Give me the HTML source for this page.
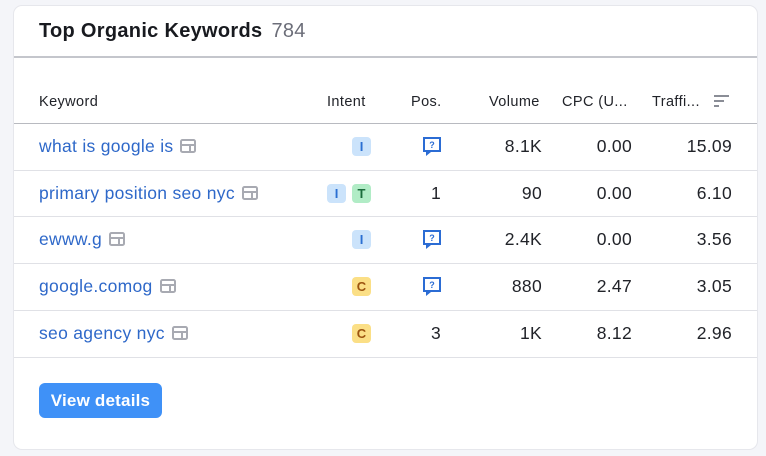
<!DOCTYPE html>
<html><head><style>
body{margin:0;width:766px;height:456px;background:#f4f5f9;font-family:"Liberation Sans",sans-serif;position:relative;overflow:hidden}
.card{position:absolute;left:14px;top:6px;width:743px;height:443px;background:#fff;border-radius:8px;box-shadow:0 0 0 1px #e6e7ec}
.t{position:absolute;white-space:nowrap}
h1{position:absolute;left:25px;top:14px;margin:0;font-size:20px;letter-spacing:0.3px;font-weight:bold;color:#181a1f}
h1 span{font-weight:normal;color:#6c6e79;margin-left:9px}
.hl{position:absolute;left:0;right:0;height:2px;background:#c4c6cc;top:50px}
.line{position:absolute;left:0;right:0;height:1px;background:#e0e1e6}
.th{font-size:14.5px;letter-spacing:0.4px;color:#212329;top:88px}
.r{text-align:right}
.kw{color:#2e68c9;font-size:17.5px;letter-spacing:0.3px;left:25px}
.num{font-size:17.5px;letter-spacing:0.3px;color:#212329}
.b{position:absolute;width:19px;height:19px;border-radius:4px;font-size:13px;font-weight:bold;text-align:center;line-height:19px}
.I{background:#cbe3fb;color:#2b6fd2}.T{background:#b1ecc6;color:#1b6b3c}.C{background:#fbdf86;color:#9c5410}
.ic{display:inline-block;vertical-align:-1px;margin-left:7px}
.btn{position:absolute;left:25px;top:377px;width:123px;height:35px;background:#3f91f7;border-radius:6px;color:#fff;font-size:17px;letter-spacing:0.2px;font-weight:bold;line-height:35px;text-align:center}
</style></head><body>
<div class="card">
<h1>Top Organic Keywords<span>784</span></h1>
<div class="hl"></div>
<div class="t th" style="left:25px">Keyword</div>
<div class="t th" style="left:313px">Intent</div>
<div class="t th" style="left:397px">Pos.</div>
<div class="t th" style="left:475px">Volume</div>
<div class="t th" style="left:548px">CPC (U...</div>
<div class="t th" style="left:638px">Traffi...</div>
<svg class="t" style="left:700px;top:88px" width="16" height="14"><rect x="0" y="1" width="15" height="2" fill="#8a8d96"/><rect x="0" y="6" width="10" height="2" fill="#8a8d96"/><rect x="0" y="11" width="5" height="2" fill="#8a8d96"/></svg>
<div class="line" style="top:117px;height:1px;background:#b8bac0"></div>
<div class="line" style="top:164px"></div>
<div class="line" style="top:210px"></div>
<div class="line" style="top:257px"></div>
<div class="line" style="top:304px"></div>
<div class="line" style="top:351px"></div>

<div class="t kw" style="top:130px">what is google is<svg class="ic" width="16" height="14"><rect x="1" y="1" width="14" height="12" rx="1.5" fill="none" stroke="#a8aab2" stroke-width="2"/><rect x="1" y="5" width="14" height="2" fill="#a8aab2"/><rect x="9" y="5" width="2" height="8" fill="#a8aab2"/></svg></div>
<div class="t kw" style="top:177px">primary position seo nyc<svg class="ic" width="16" height="14"><rect x="1" y="1" width="14" height="12" rx="1.5" fill="none" stroke="#a8aab2" stroke-width="2"/><rect x="1" y="5" width="14" height="2" fill="#a8aab2"/><rect x="9" y="5" width="2" height="8" fill="#a8aab2"/></svg></div>
<div class="t kw" style="top:223px">ewww.g<svg class="ic" width="16" height="14"><rect x="1" y="1" width="14" height="12" rx="1.5" fill="none" stroke="#a8aab2" stroke-width="2"/><rect x="1" y="5" width="14" height="2" fill="#a8aab2"/><rect x="9" y="5" width="2" height="8" fill="#a8aab2"/></svg></div>
<div class="t kw" style="top:270px">google.comog<svg class="ic" width="16" height="14"><rect x="1" y="1" width="14" height="12" rx="1.5" fill="none" stroke="#a8aab2" stroke-width="2"/><rect x="1" y="5" width="14" height="2" fill="#a8aab2"/><rect x="9" y="5" width="2" height="8" fill="#a8aab2"/></svg></div>
<div class="t kw" style="top:317px">seo agency nyc<svg class="ic" width="16" height="14"><rect x="1" y="1" width="14" height="12" rx="1.5" fill="none" stroke="#a8aab2" stroke-width="2"/><rect x="1" y="5" width="14" height="2" fill="#a8aab2"/><rect x="9" y="5" width="2" height="8" fill="#a8aab2"/></svg></div>

<div class="b I" style="left:338px;top:131px">I</div>
<div class="b I" style="left:313px;top:178px">I</div><div class="b T" style="left:338px;top:178px">T</div>
<div class="b I" style="left:338px;top:224px">I</div>
<div class="b C" style="left:338px;top:271px">C</div>
<div class="b C" style="left:338px;top:318px">C</div>

<svg class="t" style="left:408px;top:130px" width="20" height="21"><path d="M1 1h18v15H9l-5 4v-4H1z" fill="#2b6cd4"/><rect x="3" y="3" width="14" height="11" fill="#fff"/><text x="10" y="12" font-size="9" font-weight="bold" text-anchor="middle" fill="#2b6cd4" font-family="Liberation Sans">?</text></svg>
<svg class="t" style="left:408px;top:223px" width="20" height="21"><path d="M1 1h18v15H9l-5 4v-4H1z" fill="#2b6cd4"/><rect x="3" y="3" width="14" height="11" fill="#fff"/><text x="10" y="12" font-size="9" font-weight="bold" text-anchor="middle" fill="#2b6cd4" font-family="Liberation Sans">?</text></svg>
<svg class="t" style="left:408px;top:270px" width="20" height="21"><path d="M1 1h18v15H9l-5 4v-4H1z" fill="#2b6cd4"/><rect x="3" y="3" width="14" height="11" fill="#fff"/><text x="10" y="12" font-size="9" font-weight="bold" text-anchor="middle" fill="#2b6cd4" font-family="Liberation Sans">?</text></svg>
<div class="t num r" style="right:316px;top:177px">1</div>
<div class="t num r" style="right:316px;top:317px">3</div>

<div class="t num r" style="right:215px;top:130px">8.1K</div>
<div class="t num r" style="right:215px;top:177px">90</div>
<div class="t num r" style="right:215px;top:223px">2.4K</div>
<div class="t num r" style="right:215px;top:270px">880</div>
<div class="t num r" style="right:215px;top:317px">1K</div>

<div class="t num r" style="right:125px;top:130px">0.00</div>
<div class="t num r" style="right:125px;top:177px">0.00</div>
<div class="t num r" style="right:125px;top:223px">0.00</div>
<div class="t num r" style="right:125px;top:270px">2.47</div>
<div class="t num r" style="right:125px;top:317px">8.12</div>

<div class="t num r" style="right:25px;top:130px">15.09</div>
<div class="t num r" style="right:25px;top:177px">6.10</div>
<div class="t num r" style="right:25px;top:223px">3.56</div>
<div class="t num r" style="right:25px;top:270px">3.05</div>
<div class="t num r" style="right:25px;top:317px">2.96</div>

<div class="btn">View details</div>
</div>
</body></html>
